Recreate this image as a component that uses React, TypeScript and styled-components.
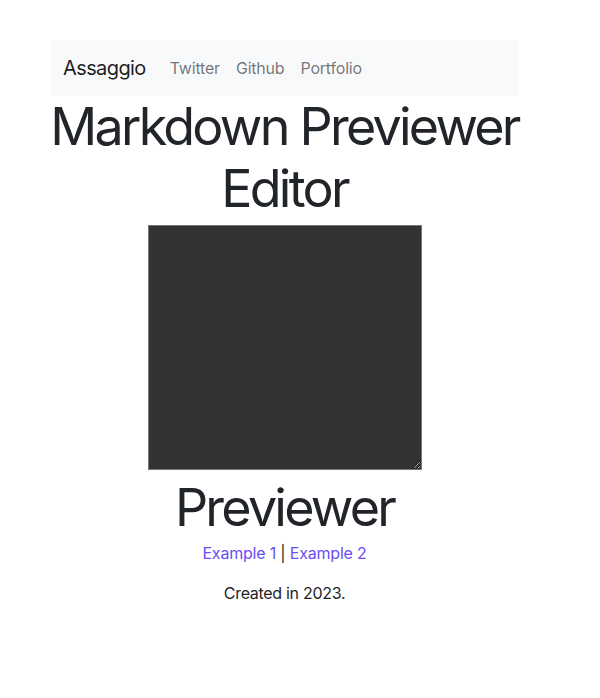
import React from "react";
import styled, { createGlobalStyle } from "styled-components";

const Global = createGlobalStyle`
  html, body { margin: 0; padding: 0; background: #fff; }
  body {
    font-family: Inter, "Noto Sans", system-ui, sans-serif;
    color: #212529;
    font-size: 16px;
    line-height: 1.5;
  }
  * { box-sizing: border-box; }
`;

const Page = styled.div`
  width: 467px;
  margin: 40px 0 0 51px;
  display: flex;
  flex-direction: column;
  align-items: center;
`;

const Navbar = styled.nav`
  width: 100%;
  height: 56px;
  background: #f8f9fa;
  display: flex;
  align-items: center;
  padding: 0 12px;
`;

const Brand = styled.a`
  font-size: 20px;
  letter-spacing: -0.6px;
  color: rgba(0, 0, 0, 0.9);
  text-decoration: none;
  margin-right: 16px;
`;

const NavLink = styled.a`
  font-size: 16px;
  letter-spacing: -0.2px;
  color: rgba(0, 0, 0, 0.55);
  text-decoration: none;
  padding: 8px;
`;

const Title = styled.h1`
  margin: 0;
  font-size: 52px;
  letter-spacing: -2.75px;
  font-weight: 400;
  line-height: 1.2;
  text-align: center;
  white-space: nowrap;
`;

const Editor = styled.textarea`
  width: 274px;
  height: 245px;
  background: #333;
  color: #fff;
  border: 1px solid #767676;
  margin: 4px 0 7px;
  padding: 2px;
  display: block;
`;

const Links = styled.p`
  margin: 2px 0 0;
  text-align: center;
  letter-spacing: -0.2px;
`;

const Link = styled.a`
  color: #6c4ef5;
  text-decoration: none;
`;

const Footer = styled.p`
  margin: 16px 0 0;
  text-align: center;
  letter-spacing: -0.3px;
`;

export default function App() {
  return (
    <>
      <Global />
      <Page>
        <Navbar>
          <Brand href="#">Assaggio</Brand>
          <NavLink href="#">Twitter</NavLink>
          <NavLink href="#">Github</NavLink>
          <NavLink href="#">Portfolio</NavLink>
        </Navbar>
        <Title>Markdown Previewer</Title>
        <Title>Editor</Title>
        <Editor id="editor" />
        <Title>Previewer</Title>
        <Links>
          <Link href="#">Example 1</Link> | <Link href="#">Example 2</Link>
        </Links>
        <Footer>Created in 2023.</Footer>
      </Page>
    </>
  );
}
